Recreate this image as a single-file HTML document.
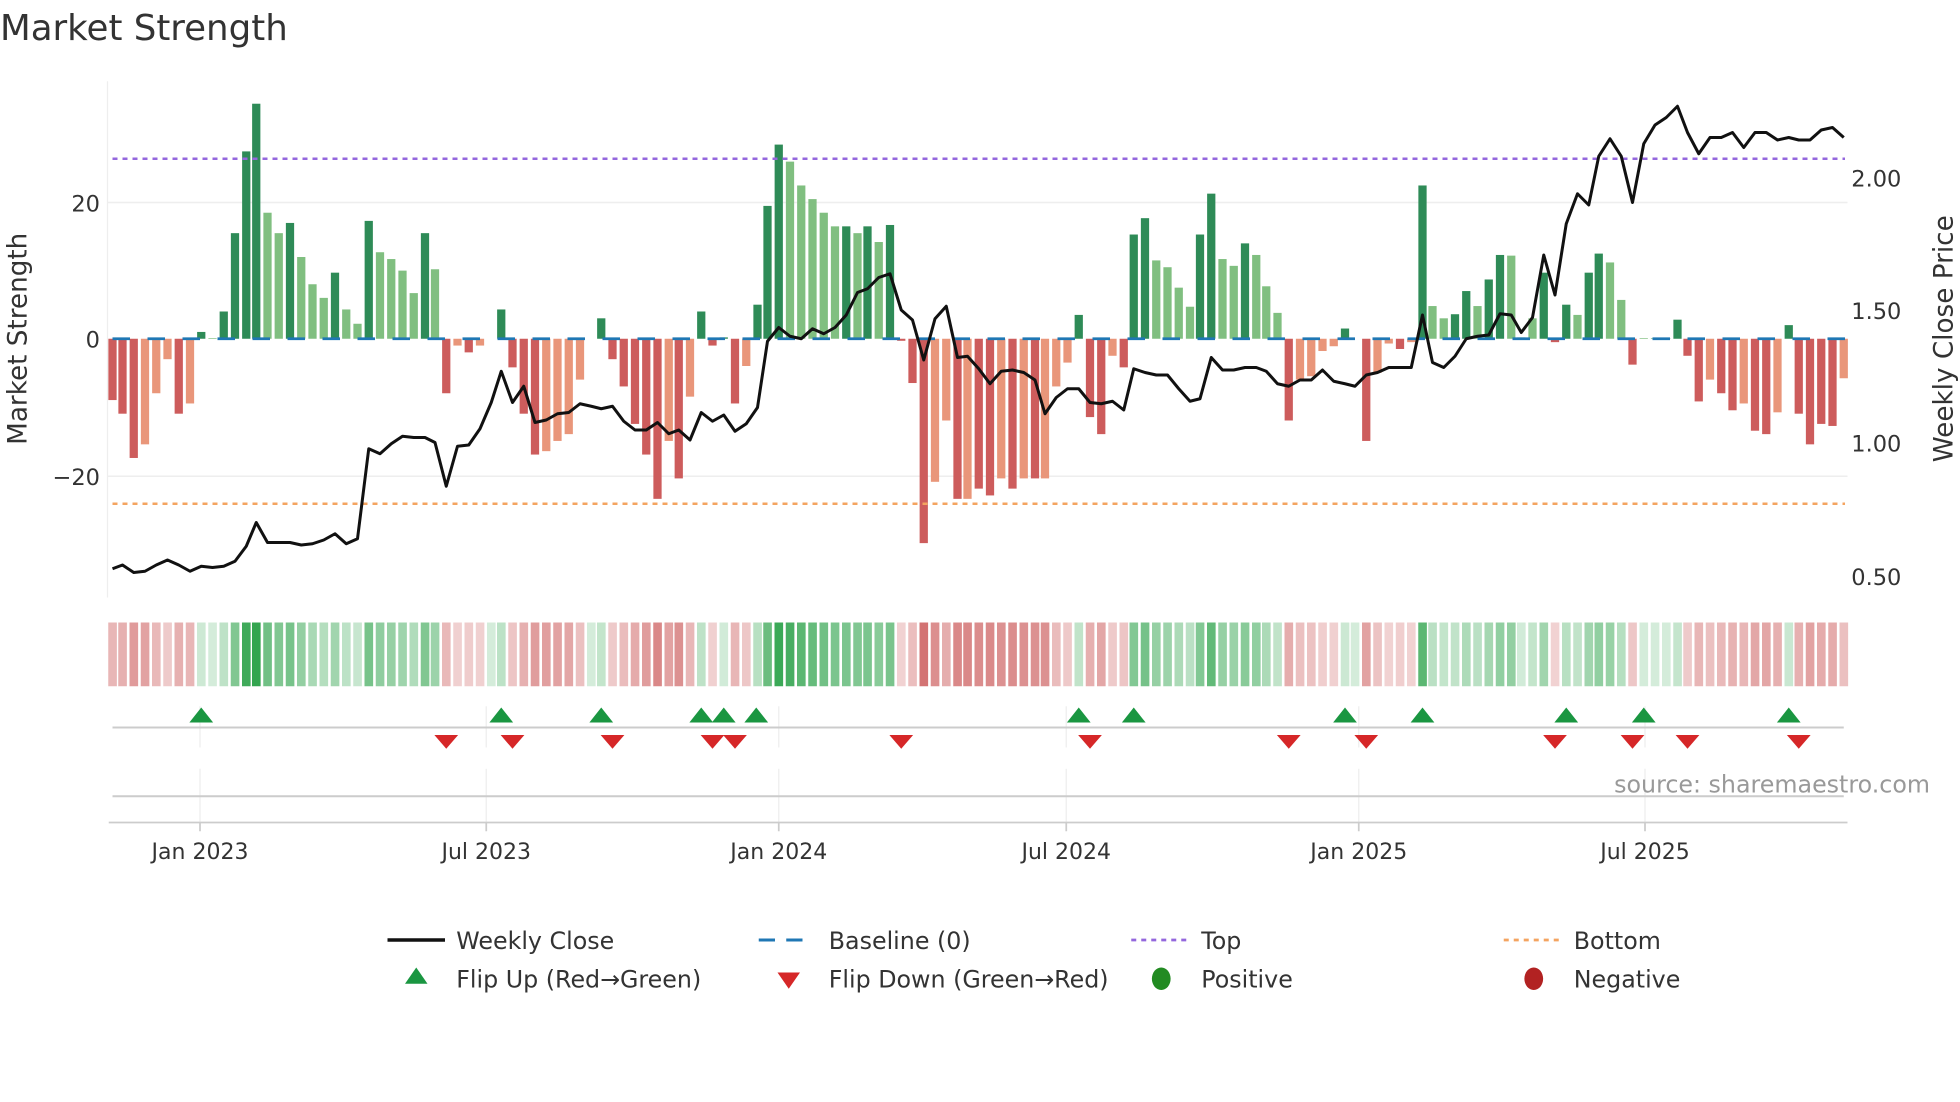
<!DOCTYPE html>
<html><head><meta charset="utf-8">
<style>
html,body{margin:0;padding:0;background:#fff;}
svg{display:block;}
text{font-family:"DejaVu Sans","Liberation Sans",sans-serif;fill:#333;}
</style></head><body>
<svg id="s" width="1960" height="1102" viewBox="0 0 1568 881.6" xmlns="http://www.w3.org/2000/svg">
<rect width="1568" height="882" fill="#fff"/>
<text x="0" y="32" font-size="28.5" fill="#333">Market Strength</text>
<line x1="86" y1="65" x2="86" y2="478" stroke="#eee" stroke-width="1"/>
<line x1="86" y1="162" x2="1478" y2="162" stroke="#eee" stroke-width="1.2"/>
<line x1="86" y1="381" x2="1478" y2="381" stroke="#eee" stroke-width="1.2"/>
<g id="bars"></g>
<line x1="90" y1="271" x2="1476" y2="271" stroke="#1f77b4" stroke-width="2.2" stroke-dasharray="14,14"/>
<line x1="90" y1="127" x2="1476" y2="127" stroke="#9467dd" stroke-width="2" stroke-dasharray="4,4"/>
<line x1="90" y1="403" x2="1476" y2="403" stroke="#f4a460" stroke-width="2" stroke-dasharray="4,4"/>
<polyline id="price" fill="none" stroke="#111" stroke-width="2.4" stroke-linejoin="round"/>
<g font-size="18" text-anchor="end">
<text x="80" y="169">20</text>
<text x="80" y="278">0</text>
<text x="80" y="388">−20</text>
</g>
<g font-size="18">
<text x="1481" y="149">2.00</text>
<text x="1481" y="255">1.50</text>
<text x="1481" y="361">1.00</text>
<text x="1481" y="468">0.50</text>
</g>
<text transform="translate(21,271) rotate(-90)" font-size="21" text-anchor="middle">Market Strength</text>
<text transform="translate(1562,271) rotate(-90)" font-size="21" text-anchor="middle">Weekly Close Price</text>
<g id="strip"></g>
<g stroke="#eee" stroke-width="1">
<line x1="160" y1="565" x2="160" y2="598"/><line x1="389" y1="565" x2="389" y2="598"/><line x1="623" y1="565" x2="623" y2="598"/><line x1="853" y1="565" x2="853" y2="598"/><line x1="1087" y1="565" x2="1087" y2="598"/><line x1="1316" y1="565" x2="1316" y2="598"/>
<line x1="160" y1="615" x2="160" y2="658"/><line x1="389" y1="615" x2="389" y2="658"/><line x1="623" y1="615" x2="623" y2="658"/><line x1="853" y1="615" x2="853" y2="658"/><line x1="1087" y1="615" x2="1087" y2="658"/><line x1="1316" y1="615" x2="1316" y2="658"/>
</g>
<line x1="90" y1="582" x2="1475" y2="582" stroke="#ccc" stroke-width="1.6"/>
<line x1="90" y1="637" x2="1475" y2="637" stroke="#ccc" stroke-width="1.6"/>
<g id="marks"></g>
<text x="1544" y="634" font-size="19" text-anchor="end" style="fill:#999">source: sharemaestro.com</text>
<line x1="87" y1="658" x2="1478" y2="658" stroke="#ccc" stroke-width="1.4"/>
<g stroke="#ccc" stroke-width="1.4">
<line x1="160" y1="658" x2="160" y2="665"/><line x1="389" y1="658" x2="389" y2="665"/><line x1="623" y1="658" x2="623" y2="665"/><line x1="853" y1="658" x2="853" y2="665"/><line x1="1087" y1="658" x2="1087" y2="665"/><line x1="1316" y1="658" x2="1316" y2="665"/>
</g>
<g font-size="17.6" text-anchor="middle">
<text x="160" y="687">Jan 2023</text><text x="389" y="687">Jul 2023</text><text x="623" y="687">Jan 2024</text><text x="853" y="687">Jul 2024</text><text x="1087" y="687">Jan 2025</text><text x="1316" y="687">Jul 2025</text>
</g>
<g font-size="19">
<line x1="310" y1="752" x2="356" y2="752" stroke="#111" stroke-width="2.8"/>
<text x="365" y="759">Weekly Close</text>
<line x1="607" y1="752" x2="651" y2="752" stroke="#1f77b4" stroke-width="2.4" stroke-dasharray="13,9"/>
<text x="663" y="759">Baseline (0)</text>
<line x1="905" y1="752" x2="949" y2="752" stroke="#9467dd" stroke-width="2.2" stroke-dasharray="4,4"/>
<text x="961" y="759">Top</text>
<line x1="1203" y1="752" x2="1247" y2="752" stroke="#f4a460" stroke-width="2.2" stroke-dasharray="4,4"/>
<text x="1259" y="759">Bottom</text>
<polygon points="324,787 342,787 333,774" fill="#1a9641"/>
<text x="365" y="790">Flip Up (Red→Green)</text>
<polygon points="622,778 640,778 631,791" fill="#d62728"/>
<text x="663" y="790">Flip Down (Green→Red)</text>
<ellipse cx="929" cy="783" rx="7.5" ry="9" fill="#228b22"/>
<text x="961" y="790">Positive</text>
<ellipse cx="1227" cy="783" rx="7.5" ry="9" fill="#b22222"/>
<text x="1259" y="790">Negative</text>
</g>
</svg>
<script>
var NS="http://www.w3.org/2000/svg";
function el(p,t,a){var e=document.createElementNS(NS,t);for(var k in a)e.setAttribute(k,a[k]);p.appendChild(e);return e;}
var B=[[90,-9,'r'],[98,-11,'r'],[107,-17.5,'r'],[116,-15.5,'s'],[125,-8,'s'],[134,-3,'s'],[143,-11,'r'],[152,-9.5,'s'],
[161,1,'d'],[170,0.1,'l'],[179,4,'d'],[188,15.5,'d'],[197,27.5,'d'],[205,34.5,'d'],[214,18.5,'l'],[223,15.5,'l'],[232,17,'d'],[241,12,'l'],[250,8,'l'],[259,6,'l'],[268,9.7,'d'],[277,4.3,'l'],[286,2.2,'l'],[295,17.3,'d'],[304,12.7,'l'],[313,11.7,'l'],[322,10,'l'],[331,6.7,'l'],[340,15.5,'d'],[348,10.2,'l'],
[357,-8,'r'],[366,-1,'s'],[375,-2,'r'],[384,-1,'s'],[393,0,'s'],[401,4.3,'d'],[410,-4.2,'r'],[419,-11,'r'],[428,-17,'r'],[437,-16.5,'s'],[446,-15,'s'],[455,-14,'s'],[464,-6,'s'],[473,0,'s'],[481,3,'d'],[490,-3,'r'],[499,-7,'r'],[508,-12.5,'r'],[517,-17,'r'],[526,-23.5,'r'],[535,-15,'s'],[543,-20.5,'r'],[552,-8.5,'s'],[561,4,'d'],[570,-1,'r'],[579,0.2,'d'],[588,-9.5,'r'],[597,-4,'s'],
[606,5,'d'],[614,19.5,'d'],[623,28.5,'d'],[632,26,'l'],[641,22.5,'l'],[650,20.5,'l'],[659,18.5,'l'],[668,16.5,'l'],[677,16.5,'d'],[686,15.5,'l'],[694,16.5,'d'],[703,14.2,'l'],[712,16.7,'d'],[721,-0.3,'r'],
[730,-6.5,'r'],[739,-30,'r'],[748,-21,'s'],[757,-12,'s'],[766,-23.5,'r'],[774,-23.5,'s'],[783,-22,'r'],[792,-23,'r'],[801,-20.5,'s'],[810,-22,'r'],[819,-20.5,'s'],[828,-20.5,'r'],[836,-20.5,'s'],[845,-7,'s'],[854,-3.5,'s'],[863,3.5,'d'],[872,-11.5,'r'],[881,-14,'r'],[890,-2.5,'s'],[899,-4.2,'r'],
[907,15.3,'d'],[916,17.7,'d'],[925,11.5,'l'],[934,10.5,'l'],[943,7.5,'l'],[952,4.7,'l'],[960,15.3,'d'],[969,21.3,'d'],[978,11.7,'l'],[987,10.7,'l'],[996,14,'d'],[1005,12.3,'l'],[1013,7.7,'l'],[1022,3.8,'l'],
[1031,-12,'r'],[1040,-6,'s'],[1049,-5.5,'s'],[1058,-1.8,'s'],[1067,-1.1,'s'],[1076,1.5,'d'],[1084,0,'s'],[1093,-15,'r'],[1102,-5,'s'],[1111,-0.7,'s'],[1120,-1.5,'r'],[1129,-0.5,'s'],
[1138,22.5,'d'],[1146,4.8,'l'],[1155,3,'l'],[1164,3.6,'d'],[1173,7,'d'],[1182,4.8,'l'],[1191,8.7,'d'],[1200,12.3,'d'],[1209,12.2,'l'],[1217,0.2,'l'],[1226,3,'l'],[1235,9.7,'d'],[1244,-0.5,'r'],[1253,5,'d'],[1262,3.5,'l'],[1271,9.7,'d'],[1279,12.5,'d'],[1288,11.2,'l'],[1297,5.7,'l'],
[1306,-3.8,'r'],[1315,0.1,'l'],[1324,0.1,'l'],[1333,0.1,'l'],[1342,2.8,'d'],[1350,-2.5,'r'],[1359,-9.2,'r'],[1368,-6,'s'],[1377,-8,'r'],[1386,-10.5,'r'],[1395,-9.5,'s'],[1404,-13.5,'r'],[1413,-14,'r'],[1422,-10.8,'s'],[1431,2,'d'],[1439,-11,'r'],[1448,-15.5,'r'],[1457,-12.5,'r'],[1466,-12.8,'r'],[1475,-5.8,'s']];
var C={d:'#2e8b57',l:'#80bf80',r:'#cd5c5c',s:'#e9967a'};
var g=document.getElementById('bars'),st=document.getElementById('strip');
B.forEach(function(b){
 var v=b[1],h=Math.abs(v)*5.45,y=v>=0?271-h:271;
 if(h>0.3) el(g,'rect',{x:b[0]-3.3,y:y,width:6.6,height:h,fill:C[b[2]]});
 var a=Math.min(Math.abs(v)/30,1);
 var col;
 if(v>=0){a=0.2+0.75*a;col='rgba(40,160,70,'+a.toFixed(2)+')';}
 else{a=0.25+0.55*a;col='rgba(200,80,80,'+a.toFixed(2)+')';}
 el(st,'rect',{x:b[0]-3.4,y:498,width:6.9,height:51,fill:col});
});
var P=[90,455,98,452,107,458,116,457,125,452,134,448,143,452,152,457,161,453,170,454,179,453,188,449,197,437,205,418,214,434,223,434,232,434,241,436,250,435,259,432,268,427,277,435,286,431,295,359,304,363,313,355,322,349,331,350,340,350,348,354,357,389,366,357,375,356,384,343,393,322,401,297,410,322,419,309,428,338,437,336,446,331,455,330,464,323,473,325,481,327,490,325,499,337,508,344,517,344,526,338,535,347,543,344,552,352,561,330,570,337,579,332,588,345,597,339,606,326,614,273,623,262,632,269,641,271,650,263,659,267,668,262,677,252,686,234,694,231,703,222,712,219,721,248,730,256,739,288,748,255,757,245,766,286,774,285,783,295,792,307,801,297,810,296,819,298,828,304,836,331,845,318,854,311,863,311,872,322,881,323,890,321,899,328,907,295,916,298,925,300,934,300,943,311,952,321,960,319,969,286,978,296,987,296,996,294,1005,294,1013,297,1022,307,1031,309,1040,304,1049,304,1058,296,1067,305,1076,307,1084,309,1093,300,1102,298,1111,294,1120,294,1129,294,1138,252,1146,290,1155,294,1164,285,1173,271,1182,269,1191,268,1200,251,1209,252,1217,266,1226,254,1235,204,1244,236,1253,179,1262,155,1271,164,1279,125,1288,111,1297,125,1306,162,1315,115,1324,100,1333,94,1342,85,1350,106,1359,123,1368,110,1377,110,1386,106,1395,118,1404,106,1413,106,1422,112,1431,110,1439,112,1448,112,1457,104,1466,102,1475,110];
var pts=[];for(var i=0;i<P.length;i+=2)pts.push(P[i]+','+P[i+1]);
document.getElementById('price').setAttribute('points',pts.join(' '));
var m=document.getElementById('marks');
[161,401,481,561,579,605,863,907,1076,1138,1253,1315,1431].forEach(function(x){el(m,'polygon',{points:(x-9.5)+',578 '+(x+9.5)+',578 '+x+',566',fill:'#1a9641'});});
[357,410,490,570,588,721,872,1031,1093,1244,1306,1350,1439].forEach(function(x){el(m,'polygon',{points:(x-9.5)+',588 '+(x+9.5)+',588 '+x+',599',fill:'#d62728'});});
</script>
</body></html>
